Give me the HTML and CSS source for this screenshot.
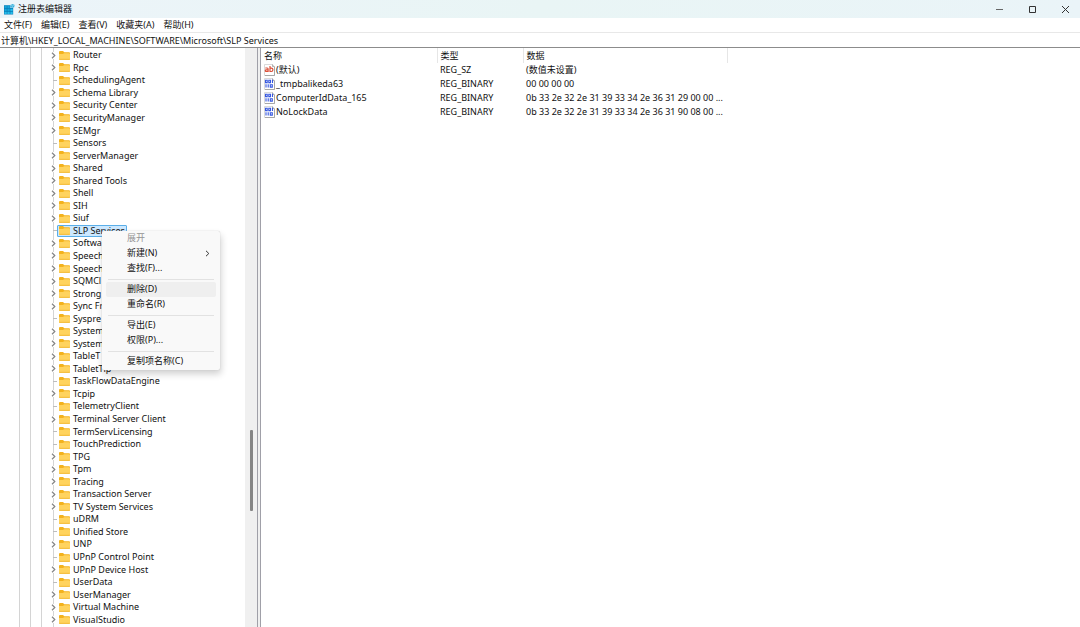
FILE: index.html
```html
<!DOCTYPE html>
<html lang="zh-CN">
<head>
<meta charset="utf-8">
<title>注册表编辑器</title>
<link rel="stylesheet" href="styles.css">
</head>
<body>
<svg class="defs" aria-hidden="true">
  <symbol id="folder" viewBox="0 0 11 9">
    <path d="M0 1q0-1 1-1h3l1.3 1.3H10q1 0 1 1V6H0z" fill="#f3b21d"/>
    <path d="M0 3h4l1-.8h5q1 0 1 1V8q0 1-1 1H1Q0 9 0 8z" fill="#ffd35e"/>
    <path d="M0 7.8h11V8q0 1-1 1H1Q0 9 0 8z" fill="#f5c043"/>
  </symbol>
  <symbol id="chev" viewBox="0 0 5 7">
    <path d="M1 .8 3.8 3.5 1 6.2" fill="none" stroke="#858585" stroke-width="1.2"/>
  </symbol>
  <symbol id="string" viewBox="0 0 11 12">
    <path d="M.5.5h8l2 2v9H.5z" fill="#fff" stroke="#d0d0d0" stroke-width=".8"/>
    <path d="M8.5.5v2h2M10.5 3v8.5H1" fill="none" stroke="#909090" stroke-width=".7"/>
    <path d="M1.3 4h1.9q.9 0 .9.9v2.600H2.300q-1 0-1-.8t1-.8h1.800M6 2v5.500h1.400q1.500 0 1.500-1.700T7.400 4.100H6" fill="none" stroke="#dc4f38" stroke-width="1.200"/>
  </symbol>
  <symbol id="binary" viewBox="0 0 11 12">
    <path d="M.5.5h8l2 2v9H.5z" fill="#fff" stroke="#d0d0d0" stroke-width=".8"/>
    <path d="M8.500.5v2h2M10.500 3v8.500H1" fill="none" stroke="#909090" stroke-width=".7"/>
    <path d="M1.500 2.200h1.700v2.400H1.500zM4.800 2.200h1.700v2.400H4.800zM8.500 1.700v3.400M2 6.200v3.400M4.200 6.200v3.400M6.300 6.700h2v2.400h-2z" fill="none" stroke="#3657e0" stroke-width="1.100"/>
  </symbol>
</svg>

<header class="titlebar">
  <svg class="app-icon" viewBox="0 0 12 12" aria-hidden="true">
    <path d="M0 2h7v3h3v7H0z" fill="#087db8"/>
    <path d="M.5 2.500h2.500V5H.5zM3.700 2.500h2.500V5H3.700zM.5 5.700h2.500v2.500H.5zM3.700 5.700h2.500v2.500H3.700z" fill="#16a5da"/>
    <path d="M.5 8.900h2.500v2.500H.5zM3.700 8.900h2.500v2.500H3.700zM7 5.700h2.500v2.500H7zM7 8.900h2.500v2.500H7z" fill="#26bdea"/>
    <path d="M7 1.500 9.500.5l2 1.200-.4 2.300-2.300.8L7 3.700z" fill="#35aedb"/>
    <path d="m7 1.500 2 1 2.500-.8M9 2.500v2.200" fill="none" stroke="#a6e2f5" stroke-width=".6"/>
  </svg>
  <h1 class="title">注册表编辑器</h1>
  <div class="controls">
    <button class="control" aria-label="最小化"><svg viewBox="0 0 9 9"><path d="M1 4.500h7" stroke="#666"/></svg></button>
    <button class="control" aria-label="最大化"><svg viewBox="0 0 9 9"><path d="M1.500 1.500h6v6h-6z" fill="none" stroke="#333"/></svg></button>
    <button class="control" aria-label="关闭"><svg viewBox="0 0 9 9"><path d="m1 1 7 7M8 1 1 8" stroke="#333"/></svg></button>
  </div>
</header>

<nav class="menubar" aria-label="菜单栏">
  <button class="menu-title">文件(F)</button>
  <button class="menu-title">编辑(E)</button>
  <button class="menu-title">查看(V)</button>
  <button class="menu-title">收藏夹(A)</button>
  <button class="menu-title">帮助(H)</button>
</nav>

<input class="address" type="text" aria-label="地址" value="计算机\HKEY_LOCAL_MACHINE\SOFTWARE\Microsoft\SLP Services">

<main class="panes">
  <section class="tree-pane" aria-label="注册表项">
    <ul class="tree">
      <li class="node"><svg class="chev"><use href="#chev"/></svg><span class="label"><svg class="folder"><use href="#folder"/></svg>Router</span></li>
      <li class="node"><svg class="chev"><use href="#chev"/></svg><span class="label"><svg class="folder"><use href="#folder"/></svg>Rpc</span></li>
      <li class="node leaf"><span class="label"><svg class="folder"><use href="#folder"/></svg>SchedulingAgent</span></li>
      <li class="node"><svg class="chev"><use href="#chev"/></svg><span class="label"><svg class="folder"><use href="#folder"/></svg>Schema Library</span></li>
      <li class="node"><svg class="chev"><use href="#chev"/></svg><span class="label"><svg class="folder"><use href="#folder"/></svg>Security Center</span></li>
      <li class="node"><svg class="chev"><use href="#chev"/></svg><span class="label"><svg class="folder"><use href="#folder"/></svg>SecurityManager</span></li>
      <li class="node"><svg class="chev"><use href="#chev"/></svg><span class="label"><svg class="folder"><use href="#folder"/></svg>SEMgr</span></li>
      <li class="node leaf"><span class="label"><svg class="folder"><use href="#folder"/></svg>Sensors</span></li>
      <li class="node"><svg class="chev"><use href="#chev"/></svg><span class="label"><svg class="folder"><use href="#folder"/></svg>ServerManager</span></li>
      <li class="node"><svg class="chev"><use href="#chev"/></svg><span class="label"><svg class="folder"><use href="#folder"/></svg>Shared</span></li>
      <li class="node"><svg class="chev"><use href="#chev"/></svg><span class="label"><svg class="folder"><use href="#folder"/></svg>Shared Tools</span></li>
      <li class="node"><svg class="chev"><use href="#chev"/></svg><span class="label"><svg class="folder"><use href="#folder"/></svg>Shell</span></li>
      <li class="node"><svg class="chev"><use href="#chev"/></svg><span class="label"><svg class="folder"><use href="#folder"/></svg>SIH</span></li>
      <li class="node"><svg class="chev"><use href="#chev"/></svg><span class="label"><svg class="folder"><use href="#folder"/></svg>Siuf</span></li>
      <li class="node leaf selected"><span class="label"><svg class="folder"><use href="#folder"/></svg>SLP Services</span>
        <div class="context-menu" role="menu">
          <button class="item" role="menuitem" disabled>展开</button>
          <button class="item" role="menuitem">新建(N)<svg class="more" viewBox="0 0 5 7"><path d="M1 .8 3.800 3.500 1 6.200" fill="none" stroke="#333"/></svg></button>
          <button class="item" role="menuitem">查找(F)...</button>
          <hr class="rule">
          <button class="item active" role="menuitem">删除(D)</button>
          <button class="item" role="menuitem">重命名(R)</button>
          <hr class="rule">
          <button class="item" role="menuitem">导出(E)</button>
          <button class="item" role="menuitem">权限(P)...</button>
          <hr class="rule">
          <button class="item" role="menuitem">复制项名称(C)</button>
        </div>
      </li>
      <li class="node"><svg class="chev"><use href="#chev"/></svg><span class="label"><svg class="folder"><use href="#folder"/></svg>Softwa</span></li>
      <li class="node"><svg class="chev"><use href="#chev"/></svg><span class="label"><svg class="folder"><use href="#folder"/></svg>Speech</span></li>
      <li class="node"><svg class="chev"><use href="#chev"/></svg><span class="label"><svg class="folder"><use href="#folder"/></svg>Speech</span></li>
      <li class="node"><svg class="chev"><use href="#chev"/></svg><span class="label"><svg class="folder"><use href="#folder"/></svg>SQMCl</span></li>
      <li class="node"><svg class="chev"><use href="#chev"/></svg><span class="label"><svg class="folder"><use href="#folder"/></svg>Strong</span></li>
      <li class="node"><svg class="chev"><use href="#chev"/></svg><span class="label"><svg class="folder"><use href="#folder"/></svg>Sync Fr</span></li>
      <li class="node leaf"><span class="label"><svg class="folder"><use href="#folder"/></svg>Syspre</span></li>
      <li class="node"><svg class="chev"><use href="#chev"/></svg><span class="label"><svg class="folder"><use href="#folder"/></svg>System</span></li>
      <li class="node"><svg class="chev"><use href="#chev"/></svg><span class="label"><svg class="folder"><use href="#folder"/></svg>System</span></li>
      <li class="node"><svg class="chev"><use href="#chev"/></svg><span class="label"><svg class="folder"><use href="#folder"/></svg>TableT</span></li>
      <li class="node"><svg class="chev"><use href="#chev"/></svg><span class="label"><svg class="folder"><use href="#folder"/></svg>TabletTip</span></li>
      <li class="node leaf"><span class="label"><svg class="folder"><use href="#folder"/></svg>TaskFlowDataEngine</span></li>
      <li class="node"><svg class="chev"><use href="#chev"/></svg><span class="label"><svg class="folder"><use href="#folder"/></svg>Tcpip</span></li>
      <li class="node leaf"><span class="label"><svg class="folder"><use href="#folder"/></svg>TelemetryClient</span></li>
      <li class="node"><svg class="chev"><use href="#chev"/></svg><span class="label"><svg class="folder"><use href="#folder"/></svg>Terminal Server Client</span></li>
      <li class="node leaf"><span class="label"><svg class="folder"><use href="#folder"/></svg>TermServLicensing</span></li>
      <li class="node leaf"><span class="label"><svg class="folder"><use href="#folder"/></svg>TouchPrediction</span></li>
      <li class="node"><svg class="chev"><use href="#chev"/></svg><span class="label"><svg class="folder"><use href="#folder"/></svg>TPG</span></li>
      <li class="node"><svg class="chev"><use href="#chev"/></svg><span class="label"><svg class="folder"><use href="#folder"/></svg>Tpm</span></li>
      <li class="node"><svg class="chev"><use href="#chev"/></svg><span class="label"><svg class="folder"><use href="#folder"/></svg>Tracing</span></li>
      <li class="node"><svg class="chev"><use href="#chev"/></svg><span class="label"><svg class="folder"><use href="#folder"/></svg>Transaction Server</span></li>
      <li class="node"><svg class="chev"><use href="#chev"/></svg><span class="label"><svg class="folder"><use href="#folder"/></svg>TV System Services</span></li>
      <li class="node leaf"><span class="label"><svg class="folder"><use href="#folder"/></svg>uDRM</span></li>
      <li class="node leaf"><span class="label"><svg class="folder"><use href="#folder"/></svg>Unified Store</span></li>
      <li class="node"><svg class="chev"><use href="#chev"/></svg><span class="label"><svg class="folder"><use href="#folder"/></svg>UNP</span></li>
      <li class="node leaf"><span class="label"><svg class="folder"><use href="#folder"/></svg>UPnP Control Point</span></li>
      <li class="node"><svg class="chev"><use href="#chev"/></svg><span class="label"><svg class="folder"><use href="#folder"/></svg>UPnP Device Host</span></li>
      <li class="node leaf"><span class="label"><svg class="folder"><use href="#folder"/></svg>UserData</span></li>
      <li class="node"><svg class="chev"><use href="#chev"/></svg><span class="label"><svg class="folder"><use href="#folder"/></svg>UserManager</span></li>
      <li class="node"><svg class="chev"><use href="#chev"/></svg><span class="label"><svg class="folder"><use href="#folder"/></svg>Virtual Machine</span></li>
      <li class="node"><svg class="chev"><use href="#chev"/></svg><span class="label"><svg class="folder"><use href="#folder"/></svg>VisualStudio</span></li>
    </ul>
    <div class="scrollbar"><div class="thumb"></div></div>
  </section>
  <div class="splitter"></div>
  <section class="values-pane" aria-label="值">
    <table class="values">
      <thead>
        <tr><th class="col-name">名称</th><th class="col-type">类型</th><th class="col-data">数据</th></tr>
      </thead>
      <tbody>
        <tr><td><span class="value-name"><svg class="value-icon"><use href="#string"/></svg>(默认)</span></td><td>REG_SZ</td><td>(数值未设置)</td></tr>
        <tr><td><span class="value-name"><svg class="value-icon"><use href="#binary"/></svg>_tmpbalikeda63</span></td><td>REG_BINARY</td><td>00 00 00 00</td></tr>
        <tr><td><span class="value-name"><svg class="value-icon"><use href="#binary"/></svg>ComputerIdData_165</span></td><td>REG_BINARY</td><td>0b 33 2e 32 2e 31 39 33 34 2e 36 31 29 00 00 ...</td></tr>
        <tr><td><span class="value-name"><svg class="value-icon"><use href="#binary"/></svg>NoLockData</span></td><td>REG_BINARY</td><td>0b 33 2e 32 2e 31 39 33 34 2e 36 31 90 08 00 ...</td></tr>
      </tbody>
    </table>
  </section>
</main>
</body>
</html>
```
FILE: styles.css
```css
* { box-sizing: border-box; }

body {
  display: flex;
  flex-direction: column;
  min-height: 100vh;
  margin: 0;
  background: #fff;
  color: #111;
  font: 9px/12px "Noto Sans", "Noto Sans CJK SC", sans-serif;
}

button, input {
  margin: 0;
  padding: 0;
  border: 0;
  background: none;
  color: inherit;
  font: inherit;
}

svg { flex: none; display: block; }
.defs { position: absolute; width: 0; height: 0; }

.titlebar {
  display: flex;
  align-items: center;
  height: 18px;
  padding-left: 4px;
  background: linear-gradient(90deg, #ecf4f9, #e9f5f5 50%, #eaf4f8);
}
.app-icon { width: 11px; height: 12px; }
.title { margin: 0 0 0 3px; font-size: 9px; font-weight: 400; }
.controls { display: flex; margin-left: auto; }
.control {
  display: flex;
  align-items: center;
  justify-content: center;
  width: 33px;
  height: 15px;
  padding-left: 3px;
}
.control svg { width: 9px; height: 9px; }

.menubar {
  display: flex;
  gap: 9px;
  height: 15px;
  padding-left: 4px;
  border-bottom: 1px solid #e8e8e8;
}

.address {
  width: 100%;
  height: 15px;
  padding-left: 1px;
  border-bottom: 1px solid #8c8c8c;
}

.panes { display: flex; flex: 1; }

.tree-pane {
  display: flex;
  width: 257px;
}
.tree {
  display: grid;
  grid-auto-rows: minmax(12px, 1fr);
  flex: 1;
  margin: 0;
  padding: 1px 0;
  list-style: none;
  background:
    linear-gradient(#d4d4d4, #d4d4d4) 19px 0 / 1px 100% no-repeat,
    linear-gradient(#d4d4d4, #d4d4d4) 30px 0 / 1px 100% no-repeat,
    linear-gradient(#d4d4d4, #d4d4d4) 41px 0 / 1px 100% no-repeat,
    linear-gradient(#d4d4d4, #d4d4d4) 53px 0 / 1px 100% no-repeat;
}
.node {
  position: relative;
  display: flex;
  align-items: center;
  padding-left: 51px;
}
.leaf::before {
  content: "";
  width: 4px;
  height: 1px;
  margin-left: 2px;
  background: #bdbdbd;
}
.chev {
  width: 5px;
  height: 7px;
  margin-right: 1px;
  background: #fff;
}
.label {
  display: flex;
  align-items: center;
  gap: 3px;
  padding: 0 1px;
  border: 1px solid transparent;
  line-height: 10px;
}
.folder { width: 11px; height: 9px; }
.selected .label {
  border-color: #5aaee8;
  border-radius: 1px;
  background: #cce8ff;
}

.scrollbar {
  display: grid;
  grid-template-rows: 66fr 14fr 20fr;
  justify-items: center;
  width: 12px;
  background: #f0f0f0;
}
.thumb {
  grid-row: 2;
  width: 3px;
  border-radius: 1px;
  background: #858585;
}

.splitter {
  width: 4px;
  border: solid #a0a0a8;
  border-width: 0 1px;
  background: #f0f0f0;
}

.values-pane { flex: 1; }
.values { border-collapse: collapse; table-layout: fixed; width: 467px; }
.values th {
  height: 15px;
  padding: 1px 0 0 3px;
  border-right: 1px solid #e6e6e6;
  font-weight: 400;
  text-align: left;
}
.values td { height: 14px; padding: 0 0 0 3px; white-space: nowrap; }
.col-name { width: 176px; }
.col-type { width: 86px; }
.value-name { display: flex; align-items: center; gap: 1px; }
.value-icon { width: 11px; height: 12px; }

.context-menu {
  position: absolute;
  z-index: 1;
  top: 6px;
  left: 102px;
  width: 118px;
  padding: 0 4px 1px;
  border-radius: 2px;
  background: #f9f9f9;
  box-shadow: 0 0 1px #b8b8b8, 1px 4px 7px #00000030;
}
.item {
  display: flex;
  align-items: center;
  justify-content: space-between;
  width: 100%;
  height: 15px;
  padding: 0 6px 0 21px;
  border-radius: 2px;
  white-space: nowrap;
}
.item:disabled { color: #949494; }
.item.active { background: #efefef; }
.more { width: 5px; height: 7px; }
.rule {
  height: 1px;
  margin: 3px 2px 2px;
  border: 0;
  background: #e2e2e2;
}
```
